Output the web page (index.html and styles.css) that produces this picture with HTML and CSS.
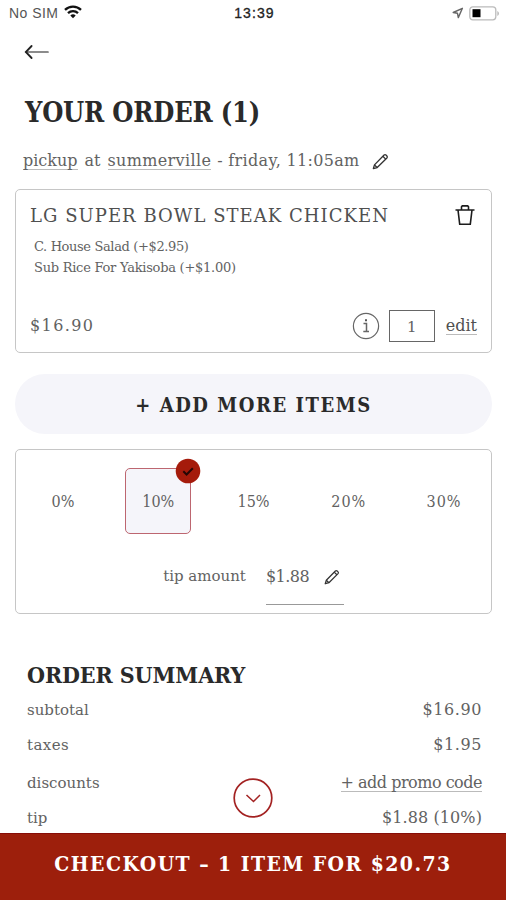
FILE: index.html
```
<!DOCTYPE html>
<html lang="en">
<head>
<meta charset="utf-8">
<title>Your order</title>
<link rel="stylesheet" href="styles.css">
</head>
<body>
<div class="phone">
  <header class="status">
    <div class="status-left">
      <span class="carrier">No SIM</span>
      <svg class="wifi" width="18" height="14" viewBox="0 0 18 14" fill="none" stroke="#111" stroke-width="2.3"><path d="M1 4.9a11.4 11.4 0 0 1 16 0M4 8.2a7.2 7.2 0 0 1 10 0"/><path d="M6.3 10.4a4 4 0 0 1 5.4 0L9 13.2z" fill="#111" stroke="none"/></svg>
    </div>
    <span class="clock">13:39</span>
    <div class="status-right">
      <svg width="12" height="12" viewBox="0 0 12 12" fill="none" stroke="#666" stroke-width="1.4" stroke-linejoin="round"><path d="M10.4 1.3 1.2 5.5l4.3.8.8 4.3z"/></svg>
      <svg width="31" height="15" viewBox="0 0 31 15"><rect x=".8" y=".8" width="26" height="13" rx="3" fill="#fff" stroke="#bbb" stroke-width="1.3"/><rect x="3.5" y="3.2" width="8" height="8" fill="#000"/><path d="M28.3 5v5q1.7-.8 1.7-2.5T28.3 5z" fill="#bbb"/></svg>
    </div>
  </header>

  <nav class="back">
    <svg width="26" height="16" viewBox="0 0 26 16" fill="none" stroke-linecap="round"><path d="M2 8h22" stroke="#666" stroke-width="1.7"/><path d="M7.6 2 1.8 8l5.8 6" stroke="#222" stroke-width="1.8"/></svg>
  </nav>

  <h1 class="title">YOUR ORDER (1)</h1>

  <div class="pickup">
    <span class="link">pickup</span><span class="at">at</span><span class="link store">summerville</span><span class="when">- friday, 11:05am</span>
    <svg class="pencil" width="17" height="17" viewBox="0 0 18 18" fill="none" stroke="#333" stroke-width="1.4" stroke-linejoin="round"><path d="M1.4 16.600 2.600 12.600 12.800 2.200q1-.9 2 0l1 1q.9 1 0 2L5.500 15.400z"/><path d="m11.500 3.500 3 3M2.600 12.600l2.900 2.800"/></svg>
  </div>

  <section class="card item">
    <div class="item-head">
      <h2 class="item-name">LG SUPER BOWL STEAK CHICKEN</h2>
      <svg class="trash" width="20" height="22" viewBox="0 0 20 22" fill="none" stroke="#1c1c1c" stroke-width="1.6"><path d="M.5 6h19M3 6l1.700 14.200h10.600L17 6M6.500 5.500V2.800l.8-.9h5.400l.8.900v2.700"/></svg>
    </div>
    <ul class="options">
      <li class="salad">C. House Salad (+$2.95)</li>
      <li>Sub Rice For Yakisoba (+$1.00)</li>
    </ul>
    <div class="item-foot">
      <span class="price">$16.90</span>
      <svg class="info" width="28" height="28" viewBox="0 0 28 28" fill="none" stroke="#666" stroke-width="1.200"><circle cx="14" cy="14" r="12.600"/><path d="M11.500 11.500h3v8M11.300 19.500h5.700" stroke-width="1.500"/><path d="M13 7.300h2v2h-2z" fill="#555" stroke="none"/></svg>
      <span class="qty">1</span>
      <span class="link edit">edit</span>
    </div>
  </section>

  <div class="add">+ ADD MORE ITEMS</div>

  <section class="card tips">
    <div class="rates">
      <span class="rate">0%</span>
      <span class="rate selected">10%
        <svg class="badge" width="26" height="26" viewBox="0 0 26 26"><circle cx="13" cy="13" r="12.300" fill="#a51b0b"/><path d="m8.300 13.300 3.300 3.200 6.200-6.300" fill="none" stroke="#260705" stroke-width="2"/></svg>
      </span>
      <span class="rate">15%</span>
      <span class="rate wide">20%</span>
      <span class="rate wide">30%</span>
    </div>
    <div class="amount">
      <span class="amount-label">tip amount</span>
      <div class="amount-field">
        <span class="amount-value">$1.88</span>
        <svg width="16" height="16" viewBox="0 0 18 18" fill="none" stroke="#333" stroke-width="1.400" stroke-linejoin="round"><path d="M1.400 16.600 2.600 12.600 12.800 2.200q1-.9 2 0l1 1q.9 1 0 2L5.500 15.400z"/><path d="m11.500 3.500 3 3M2.600 12.600l2.900 2.800"/></svg>
      </div>
    </div>
  </section>

  <section class="summary">
    <h2 class="summary-title">ORDER SUMMARY</h2>
    <div class="row"><span>subtotal</span><span class="val sub">$16.90</span></div>
    <div class="row"><span class="taxes">taxes</span><span class="val sub">$1.95</span></div>
    <div class="row discounts"><span>discounts</span><span class="val link promo">+ add promo code</span></div>
    <div class="row"><span>tip</span><span class="val">$1.88 (10%)</span></div>
  </section>

  <svg class="scroll" width="40" height="40" viewBox="0 0 40 40" fill="none" stroke="#a32222" stroke-width="1.700"><circle cx="20" cy="20" r="18.800" fill="#fff"/><path d="m13.500 17 7 6.500 6.500-6.500" stroke-width="1.500"/></svg>

  <footer class="checkout">CHECKOUT – 1 ITEM FOR $20.73</footer>
</div>
</body>
</html>
```
FILE: styles.css
```
* { box-sizing: border-box; }

body {
  margin: 0;
  background: #fff;
  color: #626262;
  font: 16px/20px "DejaVu Serif", serif;
}

h1, h2, ul { margin: 0; padding: 0; list-style: none; }
span, h1, h2, li, footer { white-space: nowrap; }

.phone {
  position: relative;
  display: flex;
  flex-direction: column;
  width: 506px;
  height: 900px;
  overflow: hidden;
}

/* status bar */
.status {
  display: grid;
  grid-template-columns: 1fr auto 1fr;
  align-items: center;
  height: 26px;
  padding: 0 6px 0 9px;
  font: 14px/26px "Liberation Sans", sans-serif;
  color: #555;
}
.status-left { display: flex; align-items: center; gap: 6px; }
.carrier { letter-spacing: .46px; }
.wifi { margin-top: -2px; }
.clock { color: #222; font-size: 14px; letter-spacing: 1.1px; -webkit-text-stroke: .3px #222; }
.status-right { display: flex; align-items: center; justify-content: flex-end; gap: 5px; }

.back { height: 52px; padding: 18px 24px 0; }
.back svg { display: block; }

.title, .summary-title, .add, .checkout {
  font-family: "DejaVu Serif Condensed", "DejaVu Serif", serif;
  font-weight: 700;
}
.title {
  height: 68px;
  padding-left: 25px;
  color: #2a2a2a;
  font-size: 27px;
  line-height: 70px;
  letter-spacing: -.2px;
}

/* pickup line */
.pickup {
  display: flex;
  align-items: center;
  height: 30px;
  margin-bottom: 13px;
  padding-left: 23px;
}
.link { border-bottom: 1px solid #bbb; line-height: 17px; }
.at { margin: 0 7px; }
.store { letter-spacing: .35px; }
.when { margin-left: 6px; letter-spacing: .32px; }
.pencil { margin-left: 12px; }

.card {
  margin: 0 14px 0 15px;
  border: 1.500px solid #c6c6c6;
  border-radius: 5px;
}

/* order item */
.item { height: 164px; padding: 14px 14px 0; }
.item-head { display: flex; justify-content: space-between; height: 32px; padding-right: 2px; }
.item-name { color: #505050; font-size: 18px; font-weight: 400; line-height: 23px; letter-spacing: 1.040px; }
.options { height: 62px; padding-left: 4px; font-size: 13px; line-height: 21px; letter-spacing: -.26px; }
.salad { letter-spacing: -.37px; }
.item-foot { display: flex; align-items: center; height: 56px; }
.price { flex: 1; letter-spacing: 1.400px; }
.qty {
  display: flex;
  align-items: center;
  justify-content: center;
  width: 46px;
  height: 32px;
  margin: 0 11px 0 9px;
  padding-top: 2px;
  border: 1.500px solid #666;
  font-size: 15px;
}
.edit { color: #505050; }

.add {
  height: 60px;
  margin: 21px 14px 15px 15px;
  border-radius: 30px;
  background: #f5f5fa;
  color: #2a2a2a;
  font-size: 20px;
  line-height: 62px;
  letter-spacing: 1.550px;
  text-align: center;
}

/* tips */
.tips { height: 165px; padding-top: 18px; }
.rates { display: flex; justify-content: space-between; padding: 0 14px; }
.rate {
  position: relative;
  width: 66px;
  height: 66px;
  font-family: "DejaVu Serif Condensed", "DejaVu Serif", serif;
  line-height: 67px;
  text-align: center;
}
.wide { letter-spacing: 1px; }
.selected {
  border: 1.500px solid #bd6670;
  border-radius: 5px;
  background: #f5f5fa;
  line-height: 65px;
}
.badge { position: absolute; top: -11px; right: -11px; }
.amount { display: flex; justify-content: center; gap: 20px; margin-top: 28px; line-height: 29px; }
.amount-label { font-size: 15px; }
.amount-field {
  display: flex;
  justify-content: space-between;
  width: 78px;
  height: 43px;
  padding-right: 4px;
  border-bottom: 1.500px solid #999;
}
.amount-field svg { margin-top: 7px; }
.amount-value { letter-spacing: -.5px; }

/* summary */
.summary { flex: 1; min-height: 0; padding: 44px 24px 0 27px; }
.summary-title { color: #2a2a2a; font-size: 23px; line-height: 34px; letter-spacing: -.1px; }
.row { display: flex; align-items: center; justify-content: space-between; height: 35px; font-size: 15px; }
.val { font-size: 16px; letter-spacing: .1px; }
.sub { letter-spacing: .6px; }
.taxes { letter-spacing: .4px; }
.discounts { height: 38px; padding-top: 4px; }
.promo { letter-spacing: -.49px; }

.scroll { position: absolute; top: 778px; left: 233px; }

.checkout {
  flex: none;
  height: 67px;
  border-top: 1px solid #870d08;
  background: #9d1f0c;
  color: #fff;
  font-size: 21px;
  line-height: 60px;
  letter-spacing: 1.450px;
  text-align: center;
}
```
